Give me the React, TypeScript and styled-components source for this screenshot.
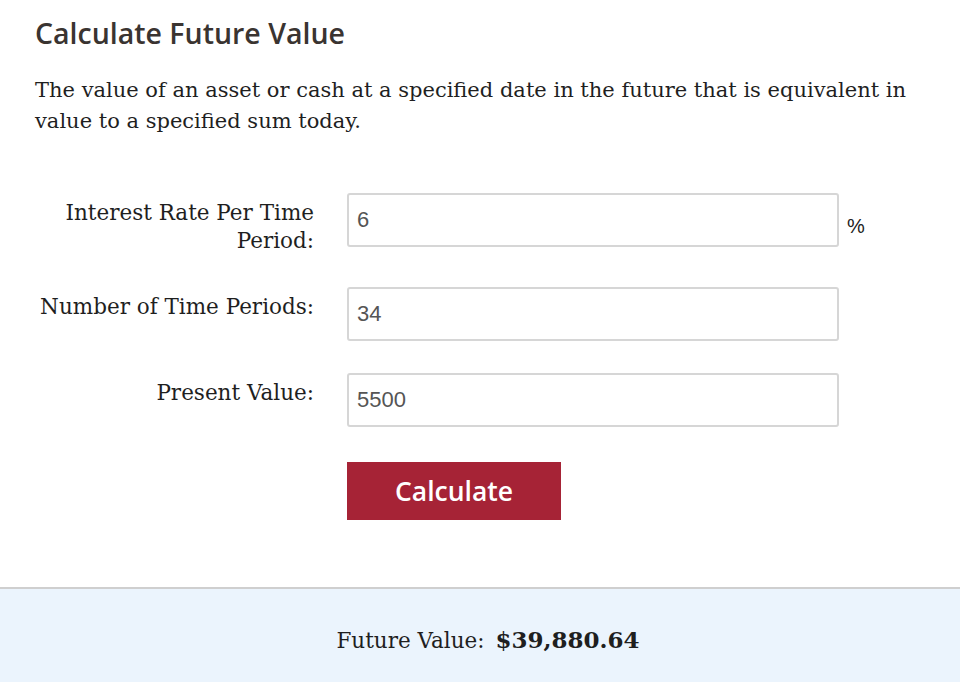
import React, { useState } from "react";
import styled, { createGlobalStyle } from "styled-components";

const GlobalStyle = createGlobalStyle`
  html, body {
    margin: 0;
    padding: 0;
    background: #ffffff;
  }
  * {
    box-sizing: border-box;
  }
`;

const Page = styled.main`
  width: 960px;
  min-height: 682px;
  display: flex;
  flex-direction: column;
  font-family: "DejaVu Serif", "Liberation Serif", serif;
  color: #1f1f1f;
`;

const Content = styled.section`
  padding: 14px 35px 67px;
`;

const Title = styled.h2`
  margin: 0;
  font-family: "Open Sans", "Lato", sans-serif;
  font-weight: 600;
  font-size: 28.5px;
  line-height: 38px;
  color: #3a3431;
`;

const Intro = styled.p`
  margin: 23px 0 0;
  font-size: 21px;
  line-height: 31px;
`;

const Form = styled.form`
  margin-top: 56px;
  display: flex;
  flex-direction: column;
  gap: 32px;
`;

const Row = styled.div`
  display: flex;
  align-items: flex-start;
`;

const Label = styled.label`
  width: 279px;
  margin-right: 33px;
  padding-top: 6px;
  text-align: right;
  font-size: 21.5px;
  line-height: 28px;
`;

const Field = styled.input`
  width: 492px;
  height: 54px;
  padding: 0 8px;
  border: 2px solid #d6d6d6;
  border-radius: 3px;
  font-family: "Liberation Sans", Arial, sans-serif;
  font-size: 22px;
  color: #555555;
  outline: none;
`;

const Unit = styled.span`
  margin: 22px 0 0 8px;
  font-family: "Liberation Sans", Arial, sans-serif;
  font-size: 20px;
  color: #222222;
`;

const Actions = styled.div`
  margin-top: 3px;
  padding-left: 312px;
`;

const CalcButton = styled.button`
  width: 214px;
  height: 58px;
  border: none;
  background: #a62336;
  color: #ffffff;
  font-family: "Open Sans", "Lato", sans-serif;
  font-weight: 600;
  font-size: 26.5px;
  cursor: pointer;
`;

const Result = styled.footer`
  flex: 1;
  border-top: 2px solid #cfcfcf;
  background: #ebf4fd;
  padding: 37px 0 0 16px;
  display: flex;
  justify-content: center;
  align-items: baseline;
  gap: 11px;
`;

const ResultLabel = styled.span`
  font-size: 21.5px;
`;

const ResultValue = styled.strong`
  font-size: 23px;
`;

export default function App() {
  const [rate, setRate] = useState("6");
  const [periods, setPeriods] = useState("34");
  const [present, setPresent] = useState("5500");
  const [result, setResult] = useState(39880.64);

  const calculate = (e: React.FormEvent) => {
    e.preventDefault();
    const fv = Number(present) * Math.pow(1 + Number(rate) / 100, Number(periods));
    setResult(Math.round(fv * 100) / 100);
  };

  return (
    <Page>
      <GlobalStyle />
      <Content>
        <Title>Calculate Future Value</Title>
        <Intro>
          The value of an asset or cash at a specified date in the future that is
          equivalent in value to a specified sum today.
        </Intro>
        <Form onSubmit={calculate}>
          <Row>
            <Label htmlFor="rate">Interest Rate Per Time Period:</Label>
            <Field id="rate" value={rate} onChange={(e) => setRate(e.target.value)} />
            <Unit>%</Unit>
          </Row>
          <Row>
            <Label htmlFor="periods">Number of Time Periods:</Label>
            <Field id="periods" value={periods} onChange={(e) => setPeriods(e.target.value)} />
          </Row>
          <Row>
            <Label htmlFor="present">Present Value:</Label>
            <Field id="present" value={present} onChange={(e) => setPresent(e.target.value)} />
          </Row>
          <Actions>
            <CalcButton type="submit">Calculate</CalcButton>
          </Actions>
        </Form>
      </Content>
      <Result>
        <ResultLabel>Future Value:</ResultLabel>
        <ResultValue>
          ${result.toLocaleString("en-US", { minimumFractionDigits: 2, maximumFractionDigits: 2 })}
        </ResultValue>
      </Result>
    </Page>
  );
}
